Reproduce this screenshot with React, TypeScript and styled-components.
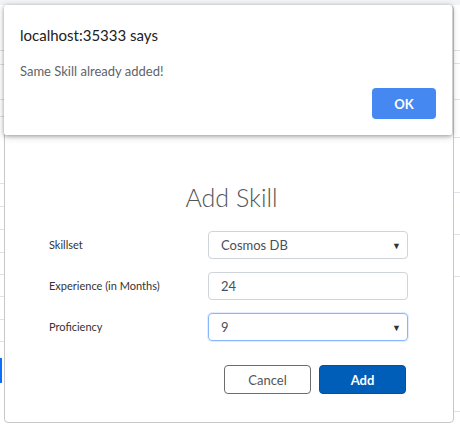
import * as React from 'react';
import styled, { createGlobalStyle } from 'styled-components';

const Global = createGlobalStyle`
  html, body {
    margin: 0;
    padding: 0;
    background: #fff;
  }
  body {
    font-family: "Lato", "Open Sans", sans-serif;
  }
`;

const Page = styled.div`
  position: relative;
  width: 460px;
  height: 431px;
  overflow: hidden;
  background: #fff;
`;

const Backdrop = styled.div`
  display: flex;
  justify-content: space-between;
  height: 100%;
  border-top: 5px solid #f1f3f4;
  box-sizing: border-box;
`;

const Stripe = styled.div<{ $w: number }>`
  width: ${p => p.$w}px;
  display: flex;
  flex-direction: column;
`;

const StripeRow = styled.div<{ $h: number; $fill?: string; $plain?: boolean }>`
  height: ${p => p.$h}px;
  flex: none;
  border-bottom: ${p => (p.$plain ? 'none' : '1px solid #dee2e6')};
  background: ${p => p.$fill || 'transparent'};
  width: ${p => (p.$fill ? '2px' : 'auto')};
  box-sizing: border-box;
`;

const Modal = styled.div`
  position: absolute;
  left: 4px;
  top: 5px;
  width: 450px;
  height: 418px;
  box-sizing: border-box;
  background: #fff;
  border: 1px solid #c8c8c8;
  border-radius: 4px;
  padding: 176px 44px 0 44px;
  display: flex;
  flex-direction: column;
`;

const ModalTitle = styled.h2`
  margin: 0 0 19px 0;
  text-align: center;
  font-weight: 300;
  font-size: 25px;
  line-height: 30px;
  color: #555;
  padding-left: 5px;
`;

const Form = styled.div`
  display: grid;
  grid-template-columns: 159px 200px;
  row-gap: 13px;
  align-items: center;
`;

const Label = styled.label`
  font-size: 11px;
  color: #333;
  padding-bottom: 2px;
`;

const Field = styled.div<{ $focus?: boolean }>`
  position: relative;
  height: 28px;
  box-sizing: border-box;
  border: 1px solid ${p => (p.$focus ? '#86b7fe' : '#ced4da')};
  border-radius: 4px;
  box-shadow: ${p => (p.$focus ? '0 0 0 1px rgba(13,110,253,0.12)' : 'none')};
  display: flex;
  align-items: center;
  padding-left: 12px;
  font-size: 13px;
  color: #495057;
`;

const Arrow = styled.span`
  position: absolute;
  right: 6px;
  top: 8px;
  font-size: 9px;
  color: #333;
`;

const Actions = styled.div`
  display: flex;
  justify-content: flex-end;
  gap: 8px;
  margin-top: 24px;
  padding-right: 2px;
  width: 359px;
  box-sizing: border-box;
`;

const Button = styled.button<{ $primary?: boolean }>`
  width: 87px;
  height: 29px;
  border-radius: 4px;
  font-family: inherit;
  font-size: 13px;
  cursor: pointer;
  border: 1px solid ${p => (p.$primary ? '#0a4f96' : '#6c6c6c')};
  background: ${p => (p.$primary ? '#005eb8' : '#fff')};
  color: ${p => (p.$primary ? '#fff' : '#555')};
  font-weight: ${p => (p.$primary ? 700 : 400)};
`;

const Alert = styled.div`
  position: absolute;
  left: 4px;
  top: 5px;
  width: 448px;
  height: 130px;
  box-sizing: border-box;
  background: #fff;
  border-radius: 2px;
  box-shadow: 0 1px 4px rgba(0, 0, 0, 0.35), 0 2px 8px rgba(0, 0, 0, 0.12);
  padding: 19px 16px 16px 16px;
  display: flex;
  flex-direction: column;
`;

const AlertTitle = styled.div`
  font-size: 15px;
  color: #202124;
  line-height: 22px;
`;

const AlertText = styled.div`
  margin-top: 16px;
  font-size: 13px;
  color: #5f6368;
  line-height: 18px;
`;

const AlertFooter = styled.div`
  margin-top: auto;
  display: flex;
  justify-content: flex-end;
`;

const OkButton = styled.button`
  width: 64px;
  height: 31px;
  border: none;
  border-radius: 4px;
  background: #4688f1;
  color: #fff;
  font-family: inherit;
  font-weight: 700;
  font-size: 13px;
`;

const leftRows = [46, 14, 35, 17, 67, 23, 23, 23, 22, 22, 23, 22];
const rightRows = [46, 13, 36, 38, 55, 42, 42, 135];

export default function App() {
  return (
    <Page>
      <Global />
      <Backdrop>
        <Stripe $w={4}>
          {leftRows.map((h, i) => (
            <StripeRow key={i} $h={h} />
          ))}
          <StripeRow $h={16} $plain />
          <StripeRow $h={25} $fill="#0d6efd" $plain />
        </Stripe>
        <Stripe $w={7}>
          {rightRows.map((h, i) => (
            <StripeRow key={i} $h={h} />
          ))}
        </Stripe>
      </Backdrop>

      <Modal>
        <ModalTitle>Add Skill</ModalTitle>
        <Form>
          <Label>Skillset</Label>
          <Field>
            Cosmos DB
            <Arrow>▼</Arrow>
          </Field>
          <Label>Experience (in Months)</Label>
          <Field>24</Field>
          <Label>Proficiency</Label>
          <Field $focus>
            9
            <Arrow>▼</Arrow>
          </Field>
        </Form>
        <Actions>
          <Button>Cancel</Button>
          <Button $primary>Add</Button>
        </Actions>
      </Modal>

      <Alert>
        <AlertTitle>localhost:35333 says</AlertTitle>
        <AlertText>Same Skill already added!</AlertText>
        <AlertFooter>
          <OkButton>OK</OkButton>
        </AlertFooter>
      </Alert>
    </Page>
  );
}
